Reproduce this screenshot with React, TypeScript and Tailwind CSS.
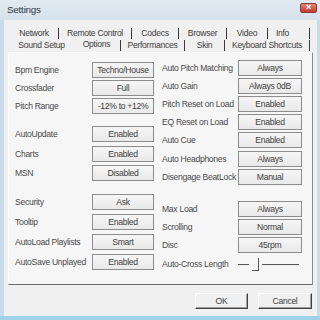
import React from 'react'

const font = { fontFamily: '"Liberation Sans", Arial, sans-serif' }

type Row = { label: string; value?: string; mt: string; slider?: boolean }

const leftRows: Row[] = [
  { label: 'Bpm Engine', value: 'Techno/House', mt: 'mt-[9px]' },
  { label: 'Crossfader', value: 'Full', mt: 'mt-[2px]' },
  { label: 'Pitch Range', value: '-12% to +12%', mt: 'mt-[2px]' },
  { label: 'AutoUpdate', value: 'Enabled', mt: 'mt-[12px]' },
  { label: 'Charts', value: 'Enabled', mt: 'mt-[4px]' },
  { label: 'MSN', value: 'Disabled', mt: 'mt-[3px]' },
  { label: 'Security', value: 'Ask', mt: 'mt-[13px]' },
  { label: 'Tooltip', value: 'Enabled', mt: 'mt-[4px]' },
  { label: 'AutoLoad Playlists', value: 'Smart', mt: 'mt-[4px]' },
  { label: 'AutoSave Unplayed', value: 'Enabled', mt: 'mt-[4px]' },
]

const rightRows: Row[] = [
  { label: 'Auto Pitch Matching', value: 'Always', mt: 'mt-[7px]' },
  { label: 'Auto Gain', value: 'Always 0dB', mt: 'mt-[2px]' },
  { label: 'Pitch Reset on Load', value: 'Enabled', mt: 'mt-[2px]' },
  { label: 'EQ Reset on Load', value: 'Enabled', mt: 'mt-[2px]' },
  { label: 'Auto Cue', value: 'Enabled', mt: 'mt-[2px]' },
  { label: 'Auto Headphones', value: 'Always', mt: 'mt-[3px]' },
  { label: 'Disengage BeatLock', value: 'Manual', mt: 'mt-[2px]' },
  { label: 'Max Load', value: 'Always', mt: 'mt-[16px]' },
  { label: 'Scrolling', value: 'Normal', mt: 'mt-[2px]' },
  { label: 'Disc', value: '45rpm', mt: 'mt-[2px]' },
  { label: 'Auto-Cross Length', mt: 'mt-[3px]', slider: true },
]

function Slider() {
  return (
    <svg width="64" height="18" viewBox="0 0 64 18" className="block">
      <line x1="0" y1="9.5" x2="11" y2="9.5" stroke="#555" />
      <line x1="14" y1="15.5" x2="20" y2="15.5" stroke="#555" />
      <line x1="20.5" y1="3" x2="20.5" y2="16" stroke="#555" />
      <line x1="24" y1="9.5" x2="61" y2="9.5" stroke="#555" />
    </svg>
  )
}

function OptionRow({ row, btnW }: { row: Row; btnW: string }) {
  return (
    <div className={`flex h-[16px] items-center ${row.mt}`}>
      <span className="min-w-0 flex-1 whitespace-nowrap text-[#4a4a4a]">{row.label}</span>
      {row.slider ? (
        <div className={`${btnW} shrink-0`}>
          <Slider />
        </div>
      ) : (
        <div
          className={`${btnW} flex h-[16px] shrink-0 items-center justify-center border border-[#8c8c8c] bg-gradient-to-b from-[#f6f6f6] to-[#e9e9e9] text-[#404040]`}
        >
          {row.value}
        </div>
      )}
    </div>
  )
}

function Sep() {
  return <div className="h-[11px] w-px shrink-0 bg-[#3a3a3a]" />
}

export default function App() {
  return (
    <div
      className="flex h-[320px] w-[320px] flex-col bg-[#cadcec] text-[8.6px] tracking-[-0.3px]"
      style={font}
    >
      {/* title bar */}
      <div className="flex h-[20px] items-center justify-between bg-gradient-to-b from-[#e2eaf2] to-[#d5e1ec] pl-[7px] pr-[3px]">
        <span className="text-[9.8px] tracking-[-0.2px] text-[#2d3a48]">Settings</span>
        <div className="mb-[5px] flex h-[10px] w-[17px] items-center justify-center rounded-[2px] border border-[#8a3a33] bg-gradient-to-b from-[#e0857a] to-[#c2392c] text-[9px] font-bold leading-none text-white">
          ×
        </div>
      </div>

      {/* client */}
      <div className="ml-[4px] mr-[3px] flex flex-1 flex-col bg-[#f0f0f0]">
        {/* tab rows */}
        <div className="mt-[7px] flex h-[12px] items-center whitespace-nowrap pl-[6px] text-[#404040]">
          <div className="w-[48px] text-center">Network</div>
          <Sep />
          <div className="w-[72px] text-center">Remote Control</div>
          <Sep />
          <div className="w-[46px] text-center">Codecs</div>
          <Sep />
          <div className="w-[47px] text-center">Browser</div>
          <Sep />
          <div className="w-[40px] text-center">Video</div>
          <Sep />
          <div className="w-[29px] text-center">Info</div>
          <div className="w-[12px]" />
          <Sep />
        </div>
        <div className="flex h-[13px] items-center whitespace-nowrap pl-[6px] text-[#404040]">
          <div className="w-[63px] text-center">Sound Setup</div>
          <div className="mb-[2px] w-[47px] text-center">Options</div>
          <Sep />
          <div className="w-[63px] text-center">Performances</div>
          <Sep />
          <div className="w-[39px] text-center">Skin</div>
          <Sep />
          <div className="w-[84px] text-center">Keyboard Shortcuts</div>
          <Sep />
        </div>

        {/* panel */}
        <div className="mx-[4px] flex h-[233px] gap-[8px] border border-b-[#6a6a6a] border-l-white border-r-[#8a8a8a] border-t-white bg-[#f6f6f6] pl-[6px] pr-[10px]">
          <div className="w-[139px]">
            {leftRows.map((r) => (
              <OptionRow key={r.label} row={r} btnW="w-[62px]" />
            ))}
          </div>
          <div className="w-[140px]">
            {rightRows.map((r) => (
              <OptionRow key={r.label} row={r} btnW="w-[64px]" />
            ))}
          </div>
        </div>

        {/* dialog buttons */}
        <div className="mr-[5px] mt-[8px] flex justify-end gap-[10px] text-[#404040]">
          <button className="flex h-[16px] w-[53px] items-center justify-center border border-b-[#404040] border-l-white border-r-[#404040] border-t-white bg-[#f0f0f0] shadow-[inset_-1px_-1px_0_#a0a0a0]">
            OK
          </button>
          <button className="flex h-[16px] w-[54px] items-center justify-center border border-b-[#404040] border-l-white border-r-[#404040] border-t-white bg-[#f0f0f0] shadow-[inset_-1px_-1px_0_#a0a0a0]">
            Cancel
          </button>
        </div>
      </div>
      <div className="h-[4px] bg-[#9fd2e6]" />
    </div>
  )
}
